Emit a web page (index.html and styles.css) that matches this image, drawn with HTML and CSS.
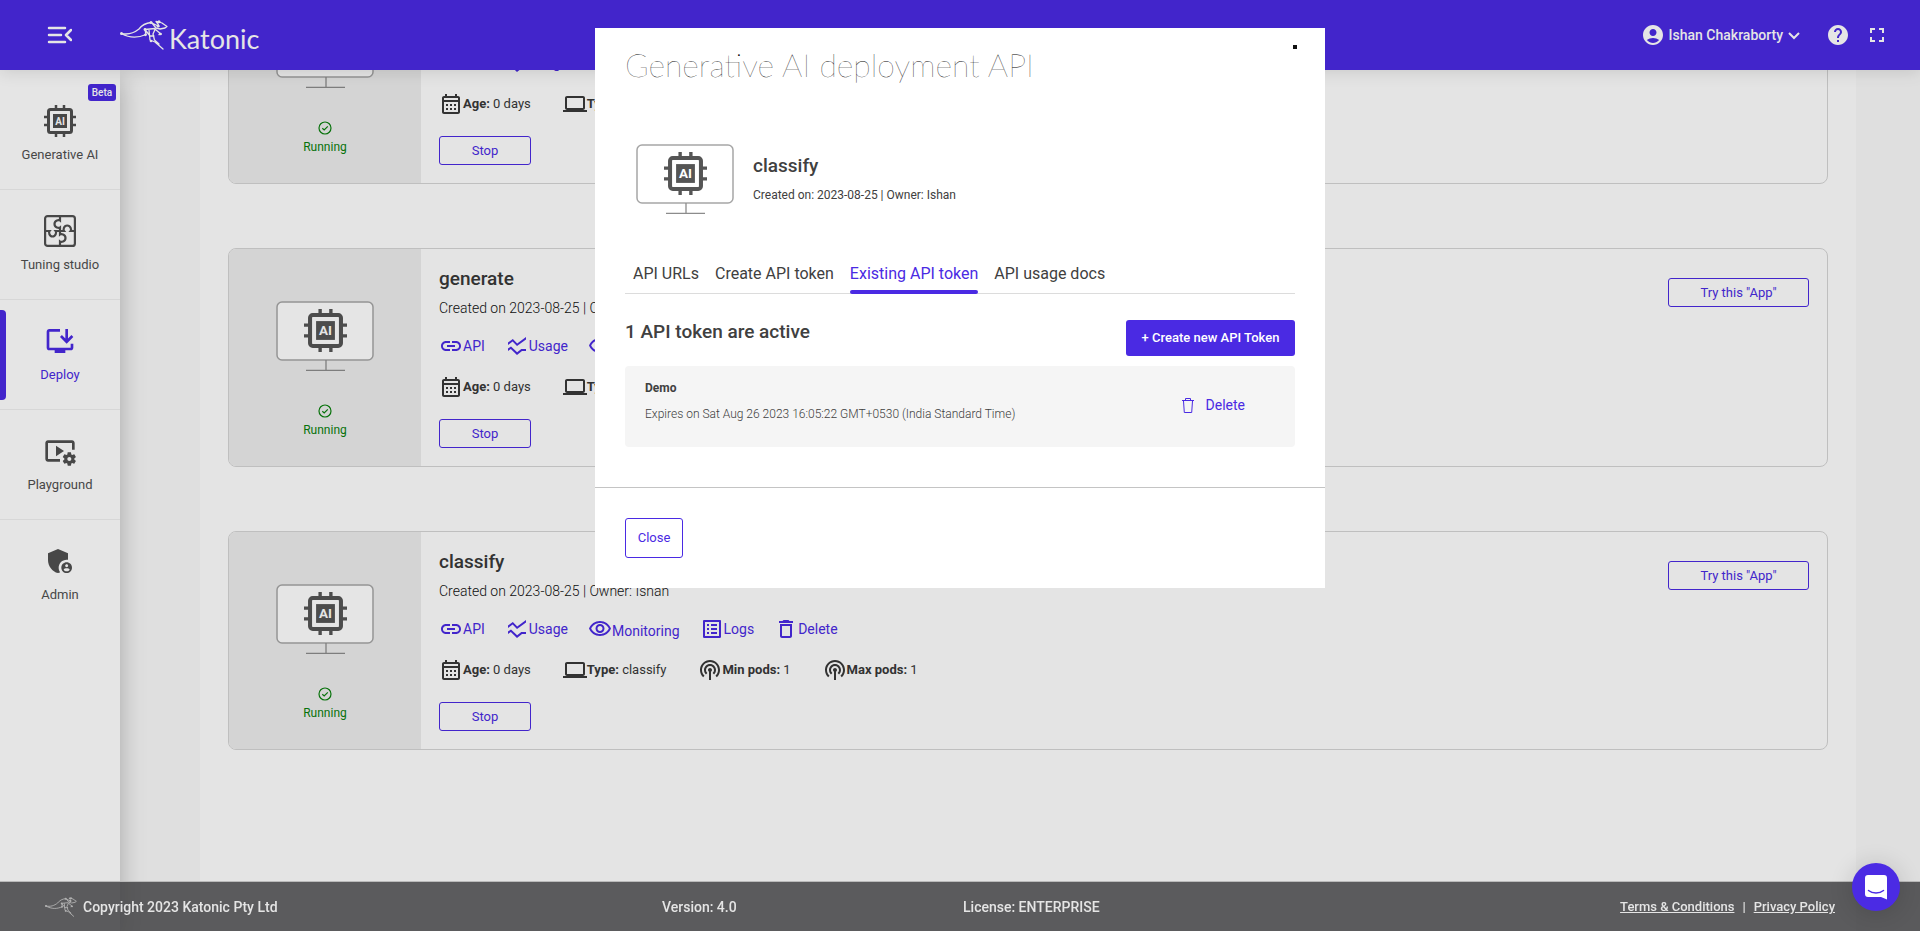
FILE: index.html
```html
<!DOCTYPE html>
<html lang="en">
<head>
<meta charset="utf-8">
<title>Katonic - Deploy</title>
<link rel="stylesheet" href="styles.css">
</head>
<body>
<svg class="sprite" aria-hidden="true">
  <symbol id="chip" viewBox="0 0 32 32">
    <rect x="4.500" y="4.500" width="23" height="23" rx="2" fill="none" stroke="currentColor" stroke-width="3"/>
    <path d="M12 0v4M20 0v4M12 28v4M20 28v4M0 12h4M0 20h4M28 12h4M28 20h4" stroke="currentColor" stroke-width="2.500"/>
    <rect x="9" y="9" width="14" height="14" fill="currentColor"/>
    <text x="16" y="19.500" text-anchor="middle" class="chip-text">AI</text>
  </symbol>
  <symbol id="roo" viewBox="0 0 48 30">
    <g fill="none" stroke="currentColor" stroke-width="1.300" stroke-linejoin="round" stroke-linecap="round">
      <path d="M1.500 13.500C8 15 14 13 19 9C22 5 26 3 31 2.500L39 6.500L38 4L36 1.500L39 2L42 3L47 6.500L45 8L40 9L36 8L32 3"/>
      <path d="M1.500 13.500C10 18.500 18 18 26 14.500L25 9.500L35 8.500L36 10L41 14L39 14.500M25 9.500L30 16M29 10L30 20L35 22L43 29M35 9.500L33 14L34.500 20L39 24M30 16L34 16"/>
    </g>
    <g fill="currentColor"><circle cx="1.500" cy="13.500" r="1.500"/><circle cx="31" cy="2.500" r="1.500"/><circle cx="39" cy="1.800" r="1.500"/><circle cx="25" cy="9.500" r="1.400"/><circle cx="25.500" cy="14.800" r="1.400"/><circle cx="38" cy="6" r="1.500"/><circle cx="40.500" cy="14" r="1.300"/><circle cx="31" cy="21" r="1.300"/></g>
  </symbol>
  <symbol id="link" viewBox="0 0 24 24"><path d="M3.900 12c0-1.710 1.390-3.100 3.100-3.100h4V7H7c-2.760 0-5 2.240-5 5s2.240 5 5 5h4v-1.900H7c-1.710 0-3.100-1.390-3.100-3.100zM8 13h8v-2H8v2zm9-6h-4v1.900h4c1.710 0 3.100 1.390 3.100 3.100s-1.390 3.100-3.100 3.100h-4V17h4c2.760 0 5-2.240 5-5s-2.240-5-5-5z"/></symbol>
  <symbol id="usage" viewBox="0 0 24 24"><path d="M21 5.470 12 12 7.620 7.620 3 11V8.520L7.830 5l4.380 4.380L21 3v2.470zM21 15h-4.700l-4.170 3.340L6 12.410l-3 2.130V17l2.800-2 6.200 6 5-4h4v-2z"/></symbol>
  <symbol id="eye" viewBox="0 0 24 24"><path d="M12 6c3.790 0 7.170 2.130 8.820 5.500C19.170 14.870 15.790 17 12 17s-7.170-2.130-8.820-5.500C4.830 8.130 8.210 6 12 6m0-2C7 4 2.730 7.110 1 11.500 2.730 15.890 7 19 12 19s9.270-3.110 11-7.500C21.270 7.110 17 4 12 4zm0 5c1.380 0 2.500 1.120 2.500 2.500S13.380 14 12 14s-2.500-1.120-2.500-2.500S10.620 9 12 9m0-2c-2.480 0-4.500 2.020-4.500 4.500S9.520 16 12 16s4.500-2.020 4.500-4.500S14.480 7 12 7z"/></symbol>
  <symbol id="logs" viewBox="0 0 24 24"><path d="M19 5v14H5V5h14m1.100-2H3.900c-.5 0-.9.4-.9.9v16.200c0 .4.4.9.9.9h16.200c.4 0 .9-.5.9-.9V3.900c0-.5-.5-.9-.9-.9zM11 7h6v2h-6V7zm0 4h6v2h-6v-2zm0 4h6v2h-6zM7 7h2v2H7zm0 4h2v2H7zm0 4h2v2H7z"/></symbol>
  <symbol id="trash" viewBox="0 0 24 24"><path d="M6 19c0 1.100.9 2 2 2h8c1.100 0 2-.9 2-2V7H6v12zM8 9h8v10H8V9zm7.500-5l-1-1h-5l-1 1H5v2h14V4z"/></symbol>
  <symbol id="calendar" viewBox="0 0 24 24"><path d="M19 4h-1V2h-2v2H8V2H6v2H5c-1.110 0-1.990.9-1.990 2L3 20c0 1.100.89 2 2 2h14c1.100 0 2-.9 2-2V6c0-1.100-.9-2-2-2zm0 16H5V10h14v10zm0-12H5V6h14v2zM9 14H7v-2h2v2zm4 0h-2v-2h2v2zm4 0h-2v-2h2v2zm-8 4H7v-2h2v2zm4 0h-2v-2h2v2zm4 0h-2v-2h2v2z"/></symbol>
  <symbol id="laptop" viewBox="0 0 24 24"><path d="M20 18c1.100 0 1.990-.9 1.990-2L22 6c0-1.100-.9-2-2-2H4c-1.100 0-2 .9-2 2v10c0 1.100.9 2 2 2H0v2h24v-2h-4zM4 6h16v10H4V6z"/></symbol>
  <symbol id="pods" viewBox="0 0 24 24"><path d="M14 12c0 .74-.4 1.380-1 1.720V22h-2v-8.280c-.6-.35-1-.98-1-1.720 0-1.100.9-2 2-2s2 .9 2 2zm-2-6c-3.310 0-6 2.690-6 6 0 1.740.75 3.310 1.940 4.400l1.420-1.420C8.530 14.250 8 13.190 8 12c0-2.210 1.790-4 4-4s4 1.790 4 4c0 1.190-.53 2.250-1.360 2.980l1.420 1.420C17.250 15.310 18 13.740 18 12c0-3.310-2.690-6-6-6zm0-4C6.480 2 2 6.480 2 12c0 2.850 1.200 5.410 3.110 7.240l1.420-1.420C4.980 16.360 4 14.290 4 12c0-4.410 3.590-8 8-8s8 3.590 8 8c0 2.290-.98 4.360-2.530 5.820l1.420 1.420C20.800 17.410 22 14.850 22 12c0-5.520-4.480-10-10-10z"/></symbol>
  <symbol id="check" viewBox="0 0 14 14"><circle cx="7" cy="7" r="6" fill="none" stroke="currentColor" stroke-width="1.200"/><path d="M4.300 7.200L6.200 9L9.800 5.300" fill="none" stroke="currentColor" stroke-width="1.200"/></symbol>
  <symbol id="monitor" viewBox="0 0 98 70">
    <rect x="1" y="1" width="96" height="58" rx="5" class="screen"/>
    <path d="M50 59v10M30 69.500h39" fill="none" stroke="#8c8c8c" stroke-width="1.300"/>
    <use href="#chip" x="28" y="8" width="43" height="43"/>
  </symbol>
</svg>

<header class="topbar">
  <button class="icon-btn menu-btn" aria-label="Collapse menu">
    <svg width="26" height="20" viewBox="0 0 26 20" fill="none" stroke="currentColor" stroke-width="2.500" stroke-linecap="round" stroke-linejoin="round"><path d="M3 3h16M3 10h12M3 17h16M25 5l-5 5 5 5"/></svg>
  </button>
  <a class="brand" href="#"><svg width="48" height="30"><use href="#roo"/></svg><span>Katonic</span></a>
  <div class="tools">
    <button class="user">
      <svg class="i24" viewBox="0 0 24 24"><path d="M12 2C6.480 2 2 6.480 2 12s4.480 10 10 10 10-4.480 10-10S17.520 2 12 2zm0 4c1.930 0 3.500 1.570 3.500 3.500S13.930 13 12 13s-3.500-1.570-3.500-3.500S10.070 6 12 6zm0 14c-2.030 0-4.430-.82-6.140-2.880C7.550 15.800 9.680 15 12 15s4.450.8 6.140 2.120C16.430 19.180 14.030 20 12 20z"/></svg>
      <span>Ishan Chakraborty</span>
      <svg class="chev" viewBox="0 0 12 12" fill="none" stroke="currentColor" stroke-width="2"><path d="M1 4l5 5 5-5"/></svg>
    </button>
    <button class="icon-btn" aria-label="Help"><svg class="i24" viewBox="0 0 24 24"><path d="M12 2C6.480 2 2 6.480 2 12s4.480 10 10 10 10-4.480 10-10S17.520 2 12 2zm1 17h-2v-2h2v2zm2.070-7.750l-.9.920C13.450 12.900 13 13.500 13 15h-2v-.5c0-1.100.45-2.100 1.170-2.830l1.240-1.260c.37-.36.59-.86.59-1.410 0-1.100-.9-2-2-2s-2 .9-2 2H8c0-2.210 1.790-4 4-4s4 1.790 4 4c0 .88-.36 1.680-.93 2.250z"/></svg></button>
    <button class="icon-btn" aria-label="Full screen"><svg class="i24" viewBox="0 0 24 24"><path d="M7 14H5v5h5v-2H7v-3zm-2-4h2V7h3V5H5v5zm12 7h-3v2h5v-5h-2v3zM14 5v2h3v3h2V5h-5z"/></svg></button>
  </div>
</header>

<div class="shell">
  <nav class="sidebar">
    <a class="nav-item" href="#"><span class="beta">Beta</span><svg class="i32"><use href="#chip"/></svg>Generative AI</a>
    <a class="nav-item" href="#">
      <svg class="i32" viewBox="0 0 32 32" fill="none" stroke="currentColor" stroke-width="2.200"><rect x="1.100" y="1.100" width="29.800" height="29.800" rx="2.500"/><path d="M16 1v4.500c-1-.8-5.500-.5-5.500 3.500s4.500 4.300 5.500 3.500V19.500c1-.8 5.500-.5 5.500 3.500s-4.500 4.300-5.500 3.500V31M1 16h4.500c-.8 1-.5 5.500 3 5.500s4-4.500 3.200-5.500H20c-.8-1-.5-5.500 3.200-5.500s4.300 4.500 3.500 5.500H31"/></svg>Tuning studio</a>
    <a class="nav-item active" href="#"><svg class="i32" viewBox="0 0 24 24"><path d="M20 17H4V5h8V3H4c-1.100 0-2 .9-2 2v12c0 1.100.9 2 2 2h4v2h8v-2h4c1.100 0 2-.9 2-2v-3h-2v3zM17 14l5-5-1.410-1.410L18 10.170V3h-2v7.170l-2.590-2.580L12 9z"/></svg>Deploy</a>
    <a class="nav-item" href="#"><svg class="i32" viewBox="0 0 24 24"><path d="M3 6h18v5h2V6c0-1.100-.9-2-2-2H3c-1.100 0-2 .9-2 2v12c0 1.100.9 2 2 2h9v-2H3V6zM15 12L9 8v8zM22.710 18.430c.03-.29.04-.58.01-.86l1.070-.85c.1-.08.12-.21.06-.32l-1.030-1.790c-.06-.11-.19-.15-.31-.11l-1.280.5c-.23-.17-.48-.31-.75-.42l-.2-1.360C20.260 13.090 20.160 13 20.030 13h-2.070c-.12 0-.23.09-.25.21l-.2 1.360c-.26.11-.51.26-.74.42l-1.280-.5c-.12-.05-.25 0-.31.11l-1.030 1.790c-.06.11-.04.24.06.32l1.070.86c-.03.29-.04.58-.01.86l-1.070.85c-.1.08-.12.21-.06.32l1.030 1.790c.06.11.19.15.31.11l1.270-.5c.23.17.48.31.75.42l.2 1.360c.02.12.12.21.25.21h2.070c.12 0 .23-.09.25-.21l.2-1.360c.26-.11.51-.26.74-.42l1.280.5c.12.05.25 0 .31-.11l1.030-1.790c.06-.11.04-.24-.06-.32l-1.070-.85zM19 19.500c-.83 0-1.500-.67-1.500-1.500s.67-1.500 1.500-1.500 1.500.67 1.500 1.500-.67 1.500-1.500 1.500z"/></svg>Playground</a>
    <a class="nav-item" href="#"><svg class="i32" viewBox="0 0 24 24"><path d="M17 11c.34 0 .67.04 1 .09V6.270L10.500 3 3 6.270v4.910c0 4.540 3.200 8.790 7.500 9.820.55-.13 1.080-.32 1.600-.55-.69-.98-1.100-2.170-1.100-3.450 0-3.310 2.690-6 6-6zM17 13c-2.210 0-4 1.790-4 4s1.790 4 4 4 4-1.790 4-4-1.790-4-4-4zm0 1.380c.62 0 1.120.51 1.120 1.120s-.51 1.120-1.120 1.120-1.120-.51-1.120-1.120.5-1.120 1.120-1.120zm0 5.370c-.93 0-1.740-.46-2.240-1.170.05-.72 1.510-1.080 2.240-1.080s2.190.36 2.240 1.080c-.5.71-1.310 1.170-2.240 1.170z"/></svg>Admin</a>
  </nav>

  <main class="content">
    <div class="panel">
      <article class="card">
        <div class="preview"><svg class="monitor"><use href="#monitor"/></svg><svg class="check"><use href="#check"/></svg><span class="status">Running</span></div>
        <div class="info">
          <h2>search</h2>
          <p class="created">Created on 2023-08-25 | Owner: Ishan</p>
          <div class="links"><a href="#"><svg class="i24"><use href="#link"/></svg>API</a><a href="#"><svg class="i24"><use href="#usage"/></svg>Usage</a><a class="low" href="#"><svg class="i24"><use href="#eye"/></svg><span>Monitoring</span></a><a href="#"><svg class="i24"><use href="#logs"/></svg>Logs</a><a href="#"><svg class="i24"><use href="#trash"/></svg>Delete</a></div>
          <div class="facts"><span><svg class="i24"><use href="#calendar"/></svg><b>Age:</b>&nbsp;0 days</span><span><svg class="i24"><use href="#laptop"/></svg><b>Type:</b>&nbsp;search</span><span><svg class="i24"><use href="#pods"/></svg><b>Min pods:</b>&nbsp;1</span><span><svg class="i24"><use href="#pods"/></svg><b>Max pods:</b>&nbsp;1</span></div>
          <button class="outline stop">Stop</button>
        </div>
        <button class="outline try">Try this "App"</button>
      </article>
      <article class="card">
        <div class="preview"><svg class="monitor"><use href="#monitor"/></svg><svg class="check"><use href="#check"/></svg><span class="status">Running</span></div>
        <div class="info">
          <h2>generate</h2>
          <p class="created">Created on 2023-08-25 | Owner: Ishan</p>
          <div class="links"><a href="#"><svg class="i24"><use href="#link"/></svg>API</a><a href="#"><svg class="i24"><use href="#usage"/></svg>Usage</a><a class="low" href="#"><svg class="i24"><use href="#eye"/></svg><span>Monitoring</span></a><a href="#"><svg class="i24"><use href="#logs"/></svg>Logs</a><a href="#"><svg class="i24"><use href="#trash"/></svg>Delete</a></div>
          <div class="facts"><span><svg class="i24"><use href="#calendar"/></svg><b>Age:</b>&nbsp;0 days</span><span><svg class="i24"><use href="#laptop"/></svg><b>Type:</b>&nbsp;generate</span><span><svg class="i24"><use href="#pods"/></svg><b>Min pods:</b>&nbsp;1</span><span><svg class="i24"><use href="#pods"/></svg><b>Max pods:</b>&nbsp;1</span></div>
          <button class="outline stop">Stop</button>
        </div>
        <button class="outline try">Try this "App"</button>
      </article>
      <article class="card">
        <div class="preview"><svg class="monitor"><use href="#monitor"/></svg><svg class="check"><use href="#check"/></svg><span class="status">Running</span></div>
        <div class="info">
          <h2>classify</h2>
          <p class="created">Created on 2023-08-25 | Owner: Ishan</p>
          <div class="links"><a href="#"><svg class="i24"><use href="#link"/></svg>API</a><a href="#"><svg class="i24"><use href="#usage"/></svg>Usage</a><a class="low" href="#"><svg class="i24"><use href="#eye"/></svg><span>Monitoring</span></a><a href="#"><svg class="i24"><use href="#logs"/></svg>Logs</a><a href="#"><svg class="i24"><use href="#trash"/></svg>Delete</a></div>
          <div class="facts"><span><svg class="i24"><use href="#calendar"/></svg><b>Age:</b>&nbsp;0 days</span><span><svg class="i24"><use href="#laptop"/></svg><b>Type:</b>&nbsp;classify</span><span><svg class="i24"><use href="#pods"/></svg><b>Min pods:</b>&nbsp;1</span><span><svg class="i24"><use href="#pods"/></svg><b>Max pods:</b>&nbsp;1</span></div>
          <button class="outline stop">Stop</button>
        </div>
        <button class="outline try">Try this "App"</button>
      </article>
    </div>
  </main>
</div>

<footer class="footer">
  <div class="copy"><svg width="32" height="20"><use href="#roo"/></svg><span>Copyright 2023 Katonic Pty Ltd</span></div>
  <span>Version: 4.0</span>
  <div class="foot-end">
    <span>License: ENTERPRISE</span>
    <div class="legal"><a href="#">Terms &amp; Conditions</a><span>|</span><a href="#">Privacy Policy</a></div>
  </div>
</footer>

<div class="overlay">
  <section class="modal" role="dialog" aria-modal="true" aria-labelledby="dlg-title">
    <div class="modal-body">
      <div class="modal-head"><h1 id="dlg-title">Generative AI deployment API</h1><button class="dot" aria-label="Close dialog"></button></div>
      <div class="model">
        <svg class="monitor"><use href="#monitor"/></svg>
        <div><h2>classify</h2><p>Created on: 2023-08-25 | Owner: Ishan</p></div>
      </div>
      <div class="tabs" role="tablist">
        <button role="tab">API URLs</button><button role="tab">Create API token</button><button role="tab" aria-selected="true" class="on">Existing API token</button><button role="tab">API usage docs</button>
      </div>
      <div class="token-head"><h3>1 API token are active</h3><button class="primary">+ Create new API Token</button></div>
      <div class="token">
        <div><strong>Demo</strong><p>Expires on Sat Aug 26 2023 16:05:22 GMT+0530 (India Standard Time)</p></div>
        <button class="delete"><svg width="12" height="15" viewBox="0 0 12 15" fill="none" stroke="currentColor"><path d="M0 2.500h12M3.500 2.500v-2h5v2M1.500 3l.8 11.500h7.400L10.500 3"/></svg>Delete</button>
      </div>
    </div>
    <div class="modal-foot"><button class="outline close">Close</button></div>
  </section>
</div>

<button class="chat" aria-label="Open chat">
  <svg width="22" height="25" viewBox="0 0 22 25"><path d="M3 0h16a3 3 0 0 1 3 3v21.500L16 22H3a3 3 0 0 1-3-3V3a3 3 0 0 1 3-3z" fill="#fff"/><path d="M3.500 15.500c4 3.300 11 3.300 15 0" fill="none" stroke="#4b2be4" stroke-width="1.500" stroke-linecap="round"/></svg>
</button>
</body>
</html>
```

FILE: styles.css
```css
:root {
  --brand: #4a2ae3;
  --ink: #383838;
  --white: #ffffff;
}

* { box-sizing: border-box; }

body {
  margin: 0;
  height: 100vh;
  display: flex;
  flex-direction: column;
  overflow: hidden;
  font-family: Roboto, "Liberation Sans", sans-serif;
  font-size: 14px;
  color: var(--ink);
  background: #f9f9f9;
}

h1, h2, h3, p { margin: 0; }
a { color: inherit; text-decoration: none; }
button {
  margin: 0;
  padding: 0;
  border: 0;
  background: none;
  font: inherit;
  color: inherit;
  cursor: pointer;
}
svg { display: block; flex: none; }

.sprite { position: absolute; width: 0; height: 0; }
.i24 { width: 24px; height: 24px; fill: currentColor; }
.i32 { width: 32px; height: 32px; }
.i32:not([fill]) { fill: currentColor; }
.chip-text { font: 700 10px Roboto, sans-serif; fill: var(--white); }
.screen { fill: var(--white); stroke: #a6a6a6; stroke-width: 1.5px; }
.monitor { width: 98px; height: 70px; color: #555; }

/* Top bar */
.topbar {
  flex: none;
  height: 70px;
  display: flex;
  align-items: center;
  padding: 0 31px 0 46px;
  background: var(--brand);
  color: var(--white);
  box-shadow: 0 2px 16px rgba(0, 0, 0, 0.12);
  position: relative;
  z-index: 2;
}
.brand { display: flex; align-items: center; gap: 1px; margin-left: 48px; font: 400 27px/32px Lato, sans-serif; }
.brand span { padding-top: 8px; }
.tools { margin-left: auto; display: flex; align-items: center; gap: 15px; }
.user { display: flex; align-items: center; gap: 4px; margin-right: 11px; font-weight: 500; }
.chev { width: 12px; height: 12px; margin-left: 1px; }

/* Side navigation */
.shell { flex: 1; min-height: 0; display: flex; }
.sidebar {
  flex: none;
  width: 120px;
  padding-top: 10px;
  background: var(--white);
  box-shadow: 0 8px 24px rgba(0, 0, 0, 0.25);
  position: relative;
  z-index: 1;
}
.nav-item {
  height: 110px;
  display: flex;
  flex-direction: column;
  align-items: center;
  gap: 8px;
  padding-top: 25px;
  border-bottom: 1px solid #f0f0f0;
  font-size: 13px;
  line-height: 20px;
  color: #505050;
  position: relative;
}
.nav-item:last-child { border-bottom: 0; }
.nav-item.active { color: var(--brand); }
.nav-item.active::before {
  content: "";
  position: absolute;
  left: 0;
  top: 10px;
  width: 6px;
  height: 90px;
  border-radius: 0 4px 4px 0;
  background: var(--brand);
}
.beta {
  position: absolute;
  top: 4px;
  right: 4px;
  width: 28px;
  border-radius: 3px;
  background: var(--brand);
  color: var(--white);
  font-size: 10px;
  font-weight: 500;
  line-height: 17px;
  text-align: center;
}

/* Deployment list, scrolled to its end */
.content { flex: 1; min-width: 0; padding: 0 64px 0 80px; display: flex; overflow: hidden; }
.panel {
  flex: 1;
  min-width: 0;
  display: flex;
  flex-direction: column;
  justify-content: flex-end;
  gap: 64px;
  padding: 0 28px 181px;
  background: #fefefe;
}
.card {
  flex: none;
  display: flex;
  align-items: flex-start;
  border: 1px solid #d5d5d5;
  border-radius: 8px;
  overflow: hidden;
}
.preview {
  align-self: stretch;
  width: 192px;
  display: flex;
  flex-direction: column;
  align-items: center;
  padding-top: 52px;
  background: #ededed;
  color: #087f0c;
}
.check { width: 14px; height: 14px; margin: 33px 0 2px; }
.status { font-size: 12px; line-height: 20px; }
.info { flex: 1; padding: 18px; line-height: 24px; }
.info h2, .model h2 { font-size: 19px; font-weight: 500; line-height: 24px; }
.created { margin-top: 7px; font-weight: 300; line-height: 20px; color: #111; }
.links, .facts { display: flex; }
.links { gap: 20px; margin-top: 16px; color: var(--brand); }
.facts { gap: 32px; margin-top: 17px; font-size: 13px; }
.facts b { font-weight: 700; }
.links a, .facts > span { display: flex; align-items: center; }
.low span { padding-top: 4px; line-height: 20px; }
.outline {
  border: 1px solid var(--brand);
  border-radius: 3px;
  color: var(--brand);
  font-size: 13px;
}
.stop { display: block; width: 92px; height: 29px; margin-top: 20px; }
.try { width: 141px; height: 29px; margin: 29px 18px 0 0; }

/* Footer */
.footer {
  position: fixed;
  inset: auto 0 0 0;
  z-index: 2;
  height: 50px;
  display: grid;
  grid-template-columns: 617fr 301fr 872fr;
  align-items: center;
  padding: 0 85px 0 45px;
  border-top: 1px solid #d0d0d0;
  background: rgba(64, 64, 66, 0.8);
  color: var(--white);
  font-weight: 500;
}
.foot-end { display: flex; justify-content: space-between; align-items: center; }
.copy { display: flex; align-items: center; gap: 6px; }
.copy svg { color: #c8c8c8; }
.legal { display: flex; gap: 8px; font-size: 13px; }
.legal a { text-decoration: underline; }

/* Dialog */
.overlay {
  position: fixed;
  inset: 0;
  z-index: 3;
  display: flex;
  justify-content: center;
  align-items: flex-start;
  padding-top: 28px;
  background: rgba(0, 0, 0, 0.1);
}
.modal { width: 730px; max-width: 100%; background: var(--white); color: #404040; }
.modal-body { padding: 17px 30px 40px; }
.modal-head { display: flex; justify-content: space-between; align-items: flex-start; }
.modal-head h1 { font: 200 32px/40px Lato, sans-serif; color: #000; text-rendering: geometricPrecision; }
.dot { width: 4px; height: 4px; margin-right: -2px; background: #111; }
.model { display: flex; align-items: flex-start; gap: 19px; margin-top: 59px; padding-left: 11px; }
.model h2 { margin-top: 10px; }
.model p { margin-top: 7px; font-size: 12px; line-height: 20px; }
.tabs { display: flex; gap: 16px; margin-top: 47px; padding-left: 8px; border-bottom: 1px solid #dcdcdc; }
.tabs button { height: 33px; margin-bottom: -1px; padding-bottom: 4px; border-bottom: 4px solid transparent; font-size: 16px; line-height: 20px; position: relative; }
.tabs .on { color: var(--brand); }
.tabs .on::after { content: ""; position: absolute; inset: auto 0 -4px 0; height: 4px; border-radius: 2px; background: var(--brand); }
.token-head { display: flex; justify-content: space-between; align-items: flex-start; margin-top: 26px; }
.token-head h3 { font-size: 19px; font-weight: 500; line-height: 24px; }
.primary { width: 169px; height: 36px; padding-bottom: 2px; border-radius: 3px; background: var(--brand); color: var(--white); font-size: 13px; font-weight: 500; }
.token {
  display: flex;
  justify-content: space-between;
  align-items: flex-start;
  margin-top: 10px;
  padding: 12px 50px 23px 20px;
  border-radius: 4px;
  background: #f5f5f5;
}
.token strong { display: block; font-size: 12px; line-height: 20px; }
.token p { margin-top: 6px; font-size: 12px; font-weight: 300; line-height: 20px; }
.delete { display: flex; align-items: center; gap: 12px; margin-top: 17px; line-height: 20px; color: var(--brand); }
.modal-foot { padding: 30px; border-top: 1px solid #c4c4c4; }
.close { width: 58px; height: 40px; padding-bottom: 2px; }

/* Chat launcher */
.chat {
  position: fixed;
  right: 20px;
  bottom: 20px;
  z-index: 4;
  width: 48px;
  height: 48px;
  display: grid;
  place-items: center;
  border-radius: 50%;
  background: #4b2be4;
  box-shadow: 0 2px 24px rgba(0, 0, 0, 0.16);
}
```
